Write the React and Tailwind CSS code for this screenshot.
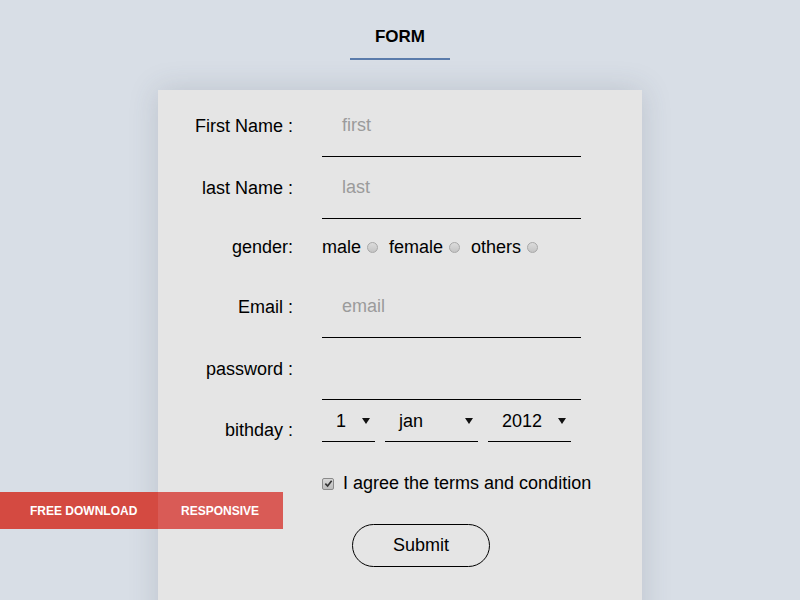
import React from 'react';

const Caret = () => (
  <svg width="8" height="6" viewBox="0 0 8 6" className="shrink-0">
    <path d="M0 0 H8 L4 6 Z" fill="#111" />
  </svg>
);

const Radio = () => (
  <span className="inline-block w-[11px] h-[11px] rounded-full border border-[#a8a8a8] bg-gradient-to-b from-[#dcdcdc] to-[#c4c4c4] ml-[6px]" />
);

const Field = ({ label, placeholder }) => (
  <div className="flex h-[62px]">
    <div className="w-[135px] flex items-center justify-end">{label}</div>
    <div className="ml-[29px] w-[259px] border-b border-black flex items-center pl-[20px] text-[#9b9b9b]">
      {placeholder}
    </div>
  </div>
);

const Select = ({ value, width }) => (
  <div className={`${width} h-[42px] border-b border-black flex items-center justify-between pl-[14px] pr-[5px] pt-[1px]`}>
    <span>{value}</span>
    <Caret />
  </div>
);

export default function App() {
  return (
    <div
      className="relative min-h-[600px] h-[600px] overflow-hidden bg-[#d8dee6] text-black text-[18px]"
      style={{ fontFamily: '"Liberation Sans", Arial, sans-serif' }}
    >
      {/* Title */}
      <div className="flex flex-col items-center pt-[27px]">
        <h1 className="text-[17px] font-bold leading-[20px]">FORM</h1>
        <div className="mt-[11px] w-[100px] h-[2px] bg-[#5a7bab]" />
      </div>

      {/* Card */}
      <div className="mt-[30px] ml-[158px] w-[484px] h-[600px] bg-[#e5e5e5] shadow-[0_0_28px_rgba(60,70,90,0.18)] pt-[5px]">
        <Field label="First Name :" placeholder="first" />
        <Field label="last Name :" placeholder="last" />

        <div className="flex h-[57px]">
          <div className="w-[135px] flex items-center justify-end">gender:</div>
          <div className="ml-[29px] flex items-center">
            <span>male</span>
            <Radio />
            <span className="ml-[11px]">female</span>
            <Radio />
            <span className="ml-[11px]">others</span>
            <Radio />
          </div>
        </div>

        <Field label="Email :" placeholder="email" />
        <Field label="password :" placeholder="" />

        <div className="flex h-[60px]">
          <div className="w-[135px] flex items-center justify-end">bithday :</div>
          <div className="ml-[29px] flex gap-[10px]">
            <Select value="1" width="w-[53px]" />
            <Select value="jan" width="w-[93px]" />
            <Select value="2012" width="w-[83px]" />
          </div>
        </div>

        <div className="flex items-center ml-[164px] h-[47px]">
          <span className="w-[12px] h-[12px] rounded-[2px] border border-[#8a8a8a] bg-gradient-to-b from-[#d8d8d8] to-[#bdbdbd] flex items-center justify-center">
            <svg width="9" height="9" viewBox="0 0 10 10">
              <path d="M1.5 5.2 L4 7.8 L8.5 2" stroke="#333" strokeWidth="1.8" fill="none" />
            </svg>
          </span>
          <span className="ml-[9px]">I agree the terms and condition</span>
        </div>

        <div className="ml-[194px] mt-[17px]">
          <button className="w-[138px] h-[43px] rounded-full border border-black text-[18px]">Submit</button>
        </div>
      </div>

      {/* Ribbon */}
      <div className="absolute left-0 top-[492px] h-[37px] flex text-white text-[12px] font-bold">
        <div className="w-[158px] bg-[#d44a41] flex items-center pl-[30px]">FREE DOWNLOAD</div>
        <div className="w-[125px] bg-[#d95b56] flex items-center pl-[23px]">RESPONSIVE</div>
      </div>
    </div>
  );
}
